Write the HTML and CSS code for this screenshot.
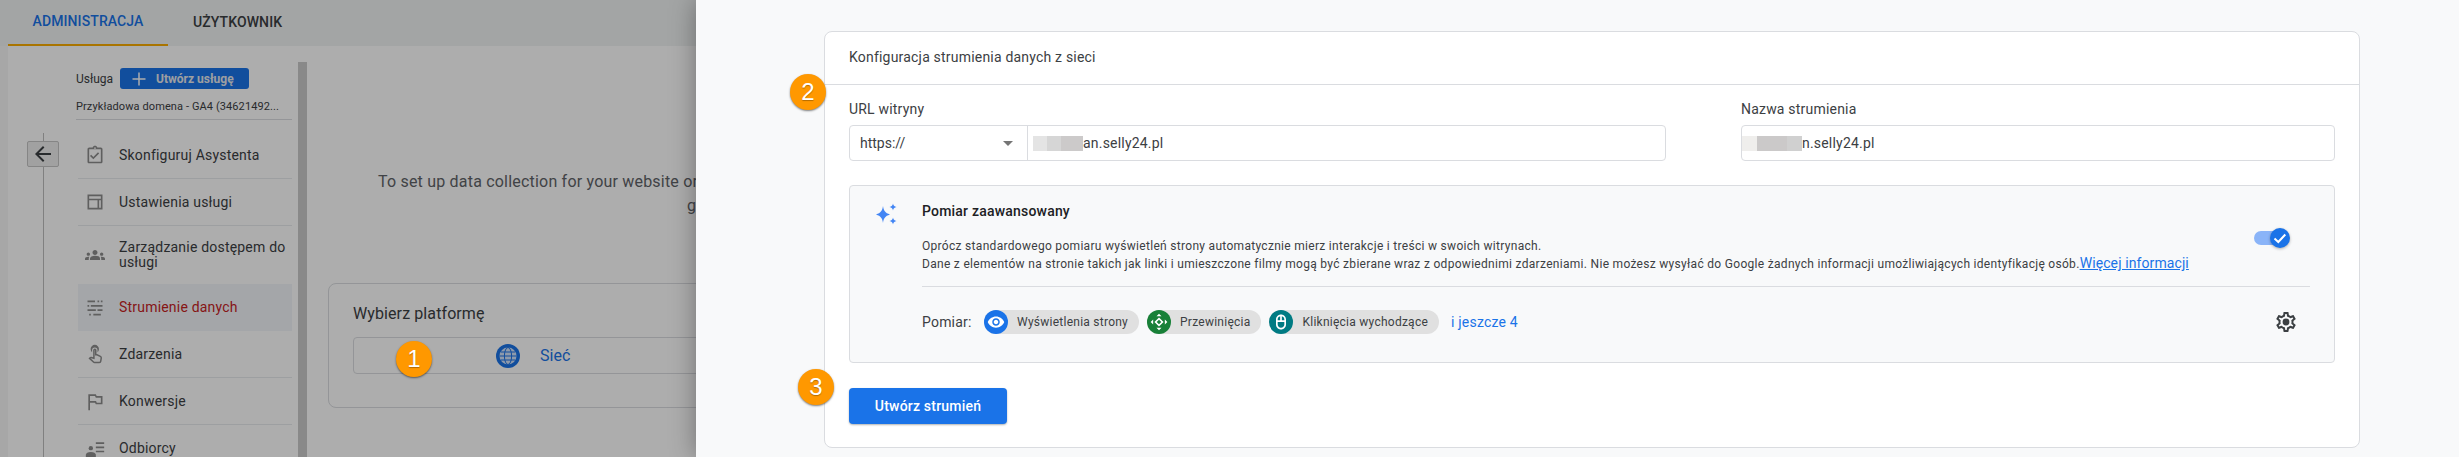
FILE: index.html
```html
<!DOCTYPE html>
<html lang="pl">
<head>
    <meta charset="UTF-8">
    <meta name="viewport" content="width=device-width, initial-scale=1.0">
    <title>Konfiguracja strumienia danych</title>
    <link rel="stylesheet" href="styles.css">
</head>
<body>
    <div class="admin">
        <div class="tabs">
            <div class="tab tab-active">ADMINISTRACJA</div>
            <div class="tab">UŻYTKOWNIK</div>
        </div>
        <div class="admin-body">
            <div class="back-col">
                <div class="back-btn">
                    <svg viewBox="0 0 24 24" width="24" height="24"><path d="M20 11H7.83l5.59-5.59L12 4l-8 8 8 8 1.41-1.41L7.83 13H20v-2z"/></svg>
                </div>
            </div>
            <div class="nav-col">
                <div class="property-row">
                    <span class="property-label">Usługa</span>
                    <div class="create-btn">
                        <svg viewBox="0 0 16 16" width="16" height="16"><path d="M8 1.5v13M1.5 8h13"/></svg>
                        Utwórz usługę
                    </div>
                </div>
                <div class="property-name">Przykładowa domena - GA4 (34621492...</div>
                <div class="nav-list">
                    <div class="nav-item">
                        <svg class="nav-icon" viewBox="0 0 24 24"><path d="M19 3h-4.2C14.400 1.800 13.300 1 12 1s-2.400.8-2.800 2H5c-1.100 0-2 .9-2 2v15c0 1.100.9 2 2 2h14c1.100 0 2-.9 2-2V5c0-1.100-.9-2-2-2zm-7-.2c.6 0 1 .5 1 1s-.4 1-1 1-1-.5-1-1 .4-1 1-1zM19 20H5V5h14v15zm-2-9.900-1.400-1.400-5.600 5.600-2.600-2.600L6 13.100l4 4z"/></svg>
                        <span>Skonfiguruj Asystenta</span>
                    </div>
                    <div class="nav-item">
                        <svg class="nav-icon" viewBox="0 0 24 24"><path d="M3 3h18v18H3V3zm2 2v3h14V5H5zm0 5v9h10v-9H5zm12 0v9h2v-9h-2z"/></svg>
                        <span>Ustawienia usługi</span>
                    </div>
                    <div class="nav-item nav-item-tall">
                        <svg class="nav-icon" viewBox="0 0 24 24"><path d="M12 12.750c1.630 0 3.070.39 4.240.9 1.080.48 1.760 1.560 1.760 2.730V18H6v-1.610c0-1.180.68-2.260 1.760-2.730 1.170-.52 2.610-.91 4.240-.91zM4 13c1.100 0 2-.9 2-2s-.9-2-2-2-2 .9-2 2 .9 2 2 2zm1.130 1.100C4.760 14.040 4.390 14 4 14c-.99 0-1.930.21-2.780.58C.48 14.900 0 15.620 0 16.430V18h4.500v-1.610c0-.83.23-1.610.63-2.290zM20 13c1.100 0 2-.9 2-2s-.9-2-2-2-2 .9-2 2 .9 2 2 2zm4 3.430c0-.81-.48-1.530-1.220-1.850C21.930 14.210 20.990 14 20 14c-.39 0-.76.04-1.130.1.4.68.63 1.460.63 2.290V18H24v-1.570zM12 6c1.660 0 3 1.340 3 3s-1.340 3-3 3-3-1.340-3-3 1.340-3 3-3z"/></svg>
                        <span>Zarządzanie dostępem do usługi</span>
                    </div>
                    <div class="nav-item nav-item-active">
                        <svg class="nav-icon" viewBox="0 0 24 24"><path d="M3 3h9v2H3zM15 3h2v2h-2zM19 3h2v2h-2zM3 8.500h2v2H3zM7 8.500h14v2H7zM3 13.500h10v2H3zM15 13.500h6v2h-6zM5 19h2v2H5zM10 19h9v2h-9z"/></svg>
                        <span>Strumienie danych</span>
                    </div>
                    <div class="nav-item">
                        <svg class="nav-icon" viewBox="0 0 24 24"><path d="M8.500 9.800A5 5 0 1 1 15 9.800V7.500a3.200 3.200 0 1 0-6.500 0z"/><path class="nav-stroke" d="M10.700 7.500a1.100 1.100 0 0 1 2.200 0V13l1.500 0 4 1.900c.8.4 1.200 1.100 1.100 1.900l-.6 3.800c-.1.900-.8 1.500-1.700 1.500h-5.800c-.5 0-.9-.2-1.200-.5L5.500 17.300l.7-.7c.3-.3.7-.4 1.100-.3l3.400.8z"/></svg>
                        <span>Zdarzenia</span>
                    </div>
                    <div class="nav-item">
                        <svg class="nav-icon" viewBox="0 0 24 24"><path d="M14 6l-1-2H4v19h2v-9h6l1 2h8V6h-7zm5 8h-4.800l-1-2H6V6h6l1 2h6v6z"/></svg>
                        <span>Konwersje</span>
                    </div>
                    <div class="nav-item">
                        <svg class="nav-icon" viewBox="0 0 24 24"><path d="M13 4h10v2H13zM13 9h10v2H13zM13 14h10v2H13z"/><circle cx="7" cy="11" r="2.600"/><path d="M1 22v-3c0-2 2.500-3.500 6-3.500s6 1.500 6 3.500v3z"/></svg>
                        <span>Odbiorcy</span>
                    </div>
                </div>
            </div>
            <div class="scrollbar"></div>
            <div class="main-col">
                <div class="setup-text">
                    <div class="setup-line">To set up data collection for your website or</div>
                    <div class="setup-line setup-line-end">ge</div>
                </div>
                <div class="platform-card">
                    <div class="platform-title">Wybierz platformę</div>
                    <div class="platform-box">
                        <svg class="globe" viewBox="0 0 24 24" width="24" height="24">
                            <circle cx="12" cy="12" r="12" fill="#1a73e8"/>
                            <circle cx="12" cy="12" r="8.500" fill="#d2e3fc"/>
                            <g fill="none" stroke="#1a73e8" stroke-width="1">
                                <ellipse cx="12" cy="12" rx="3.600" ry="8.500"/>
                                <path d="M3.500 12h17M4.800 8h14.400M4.800 16h14.400"/>
                            </g>
                        </svg>
                        <span class="platform-name">Sieć</span>
                    </div>
                </div>
            </div>
        </div>
        <div class="scrim"></div>
        <div class="step-badge step-one">1</div>
    </div>

    <div class="drawer">
        <div class="step-badge step-two">2</div>
        <div class="step-badge step-three">3</div>
        <div class="config-card">
            <div class="config-header">Konfiguracja strumienia danych z sieci</div>
            <div class="config-body">
                <div class="fields">
                    <div class="field field-url">
                        <div class="field-label">URL witryny</div>
                        <div class="field-box">
                            <div class="protocol">
                                https://
                                <span class="protocol-arrow"></span>
                            </div>
                            <div class="field-value"><span class="redacted redacted-url"></span>an.selly24.pl</div>
                        </div>
                    </div>
                    <div class="field field-name">
                        <div class="field-label">Nazwa strumienia</div>
                        <div class="field-box">
                            <div class="field-value field-value-flush"><span class="redacted redacted-name"></span>n.selly24.pl</div>
                        </div>
                    </div>
                </div>

                <div class="measure-panel">
                    <div class="measure-icon">
                        <svg viewBox="0 0 22 24" width="22" height="24"><path d="M7 4c.6 4.500 2 6.900 7 8.500-5 1.600-6.400 4-7 8.500-.6-4.500-2-6.900-7-8.500 5-1.600 6.400-4 7-8.500zM17 1.500c.3 2 1.200 3 3.500 3.500-2.300.5-3.200 1.500-3.500 3.500-.3-2-1.200-3-3.500-3.500 2.300-.5 3.200-1.500 3.500-3.500zM17 15.500c.3 2 1.200 3 3.500 3.500-2.300.5-3.200 1.500-3.500 3.500-.3-2-1.200-3-3.500-3.500 2.300-.5 3.200-1.500 3.500-3.500z"/></svg>
                    </div>
                    <div class="measure-content">
                        <div class="measure-top">
                            <div class="measure-title">Pomiar zaawansowany</div>
                            <div class="measure-info">
                                <p>Oprócz standardowego pomiaru wyświetleń strony automatycznie mierz interakcje i treści w swoich witrynach.</p>
                                <p>Dane z elementów na stronie takich jak linki i umieszczone filmy mogą być zbierane wraz z odpowiednimi zdarzeniami. Nie możesz wysyłać do Google żadnych informacji umożliwiających identyfikację osób.<a class="more-link">Więcej informacji</a></p>
                            </div>
                            <div class="toggle">
                                <div class="toggle-thumb">
                                    <svg viewBox="0 0 20 20" width="20" height="20"><path d="M4.500 10.500l3.800 3.500 7-7.500"/></svg>
                                </div>
                            </div>
                        </div>
                        <div class="measure-bottom">
                            <span class="measure-label">Pomiar:</span>
                            <div class="chip">
                                <span class="chip-icon chip-blue">
                                    <svg viewBox="0 0 24 24" width="18" height="18"><path d="M12 4.500C7 4.500 2.730 7.610 1 12c1.730 4.390 6 7.500 11 7.500s9.270-3.110 11-7.500c-1.730-4.390-6-7.500-11-7.500zM12 17c-2.760 0-5-2.240-5-5s2.240-5 5-5 5 2.240 5 5-2.240 5-5 5zm0-8c-1.660 0-3 1.340-3 3s1.340 3 3 3 3-1.340 3-3-1.340-3-3-3z"/></svg>
                                </span>
                                Wyświetlenia strony
                            </div>
                            <div class="chip">
                                <span class="chip-icon chip-green">
                                    <svg viewBox="0 0 24 24" width="20" height="20"><path fill-rule="evenodd" d="M12 6.500l5.500 5.500-5.500 5.500L6.500 12zM12 9.200L9.200 12l2.800 2.800 2.800-2.800zM12 2l3 3H9zM12 22l-3-3h6zM2 12l3-3v6zM22 12l-3 3V9z"/></svg>
                                </span>
                                Przewinięcia
                            </div>
                            <div class="chip">
                                <span class="chip-icon chip-teal">
                                    <svg viewBox="0 0 24 24" width="20" height="20"><path fill-rule="evenodd" d="M12 3c3.300 0 6 2.700 6 6v6c0 3.300-2.700 6-6 6s-6-2.700-6-6V9c0-3.300 2.700-6 6-6zm-1 2.200C9.300 5.600 8 7.100 8 9v1h3V5.200zm2 0V10h3V9c0-1.900-1.300-3.400-3-3.800zM8 12v3c0 2.200 1.800 4 4 4s4-1.800 4-4v-3H8z"/></svg>
                                </span>
                                Kliknięcia wychodzące
                            </div>
                            <a class="chip-more">i jeszcze 4</a>
                            <svg class="gear" viewBox="0 0 24 24" width="24" height="24"><path d="M19.430 12.980c.04-.32.07-.64.07-.98 0-.34-.03-.66-.07-.98l2.110-1.650c.19-.15.24-.42.12-.64l-2-3.460c-.09-.16-.26-.25-.44-.25-.06 0-.12.01-.17.03l-2.490 1c-.52-.4-1.080-.73-1.690-.98l-.38-2.650C14.460 2.180 14.250 2 14 2h-4c-.25 0-.46.18-.49.42l-.38 2.650c-.61.25-1.170.59-1.690.98l-2.490-1c-.06-.02-.12-.03-.18-.03-.17 0-.34.09-.43.25l-2 3.460c-.13.22-.07.49.12.64l2.110 1.650c-.04.32-.07.65-.07.98 0 .33.03.66.07.98l-2.110 1.650c-.19.15-.24.42-.12.64l2 3.460c.09.16.26.25.44.25.06 0 .12-.01.17-.03l2.490-1c.52.4 1.080.73 1.690.98l.38 2.650c.03.24.24.42.49.42h4c.25 0 .46-.18.49-.42l.38-2.650c.61-.25 1.170-.59 1.690-.98l2.490 1c.06.02.12.03.18.03.17 0 .34-.09.43-.25l2-3.460c.12-.22.07-.49-.12-.64l-2.110-1.650zm-1.980-1.710c.04.31.05.52.05.73 0 .21-.02.43-.05.73l-.14 1.130.89.7 1.080.84-.7 1.210-1.270-.51-1.040-.42-.9.68c-.43.32-.84.56-1.250.73l-1.060.43-.16 1.130-.2 1.350h-1.400l-.19-1.350-.16-1.130-1.060-.43c-.43-.18-.83-.41-1.230-.71l-.91-.7-1.060.43-1.270.51-.7-1.210 1.080-.84.89-.7-.14-1.130c-.03-.31-.05-.54-.05-.74s.02-.43.05-.73l.14-1.130-.89-.7-1.080-.84.7-1.210 1.270.51 1.040.42.9-.68c.43-.32.84-.56 1.250-.73l1.060-.43.16-1.130.2-1.350h1.390l.19 1.350.16 1.130 1.060.43c.43.18.83.41 1.230.71l.91.7 1.060-.43 1.270-.51.7 1.210-1.070.85-.89.7.14 1.130z"/><circle cx="12" cy="12" r="3.400"/></svg>
                        </div>
                    </div>
                </div>

                <div class="submit-btn">Utwórz strumień</div>
            </div>
        </div>
    </div>
</body>
</html>
```

FILE: styles.css
```css
* {
    box-sizing: border-box;
}

html, body {
    height: 100%;
}

body {
    margin: 0;
    display: flex;
    overflow: hidden;
    font-family: Roboto, "Liberation Sans", sans-serif;
    font-size: 14px;
    color: #202124;
    background-color: #f8f9fa;
}

/* Left side, dimmed by the scrim */
.admin {
    position: relative;
    width: 696px;
    flex: none;
    overflow: hidden;
    background-color: #f6f6f6;
}

.scrim {
    position: absolute;
    top: 0;
    right: 0;
    bottom: 0;
    left: 0;
    background-color: rgba(0, 0, 0, 0.32);
}

.tabs {
    display: flex;
    height: 46px;
    padding-left: 8px;
    background-color: #f1f3f4;
}

.tab {
    display: flex;
    align-items: center;
    justify-content: center;
    height: 46px;
    padding-bottom: 2px;
    font-size: 14px;
    font-weight: 500;
    letter-spacing: 0.1px;
    color: #3c4043;
}

.tab:last-child {
    margin-left: 25px;
}

.tab-active {
    width: 160px;
    color: #1a73e8;
    border-bottom: 2px solid #f9ab00;
}

.admin-body {
    display: flex;
    margin-left: 8px;
    height: 411px;
    background-color: #fff;
}

.back-col {
    width: 68px;
    flex: none;
    margin-top: 87px;
    padding-left: 19px;
    background: linear-gradient(#bdbdbd, #bdbdbd) no-repeat 35px 0 / 1px 100%;
}

.back-btn {
    display: flex;
    align-items: center;
    justify-content: center;
    width: 32px;
    height: 26px;
    margin-top: 8px;
    background-color: #eeeeee;
    border: 1px solid #c4c4c4;
    border-radius: 2px;
}

.back-btn svg {
    fill: #3c4043;
}

.nav-col {
    width: 216px;
    flex: none;
}

.property-row {
    display: flex;
    align-items: center;
    height: 21px;
    margin-top: 22px;
}

.property-label {
    width: 44px;
    font-size: 12px;
    color: #3c4043;
}

.create-btn {
    display: flex;
    align-items: center;
    gap: 9px;
    width: 129px;
    height: 21px;
    padding-left: 11px;
    font-size: 12px;
    font-weight: 700;
    color: #e8eaed;
    background-color: #1a73e8;
    border-radius: 3px;
}

.create-btn svg {
    fill: none;
    stroke: #fff;
    stroke-width: 1.500;
}

.property-name {
    height: 31px;
    line-height: 35px;
    font-size: 11px;
    letter-spacing: 0.1px;
    white-space: nowrap;
    color: #3c4043;
    border-bottom: 1px solid #dadce0;
}

.nav-list {
    margin: 12px 0 0 2px;
}

.nav-item {
    display: flex;
    align-items: center;
    height: 47px;
    padding-left: 7px;
    border-bottom: 1px solid #e8eaed;
    letter-spacing: 0.2px;
    line-height: 15px;
    color: #3c4043;
}

.nav-item:last-child {
    border-bottom: none;
}

.nav-item-tall {
    height: 58px;
    border-bottom: none;
}

.nav-item-active {
    color: #c5221f;
    background-color: #f2f5f9;
    border-bottom: none;
}

.nav-icon {
    width: 20px;
    height: 20px;
    flex: none;
    margin-right: 14px;
    fill: #8d8d8d;
}

.nav-stroke {
    fill: none;
    stroke: #8d8d8d;
    stroke-width: 1.800;
}

.scrollbar {
    width: 9px;
    flex: none;
    margin: 16px 0 0 6px;
    background-color: #cbcbcb;
}

.main-col {
    flex: 1;
    min-width: 0;
    padding-left: 21px;
}

.setup-text {
    padding-top: 124px;
    font-size: 16px;
    line-height: 24px;
    letter-spacing: 0.2px;
    color: #5f6368;
}

.setup-line {
    padding-left: 50px;
    white-space: nowrap;
}

.setup-line-end {
    padding-left: 359px;
}

.platform-card {
    width: 600px;
    height: 125px;
    margin-top: 65px;
    padding: 18px 24px;
    background-color: #fff;
    border: 1px solid #dadce0;
    border-radius: 8px;
}

.platform-title {
    font-size: 16px;
    line-height: 24px;
    letter-spacing: 0.1px;
    color: #3c4043;
}

.platform-box {
    display: flex;
    align-items: center;
    height: 37px;
    margin-top: 11px;
    padding-left: 142px;
    background-color: #fff;
    border: 1px solid #dadce0;
    border-radius: 4px;
}

.platform-name {
    margin-left: 20px;
    font-size: 16px;
    color: #1a73e8;
}

/* Orange step markers sit above everything else */
.step-badge {
    position: absolute;
    z-index: 3;
    display: flex;
    align-items: center;
    justify-content: center;
    width: 36px;
    height: 36px;
    font-family: "Liberation Sans", Arial, sans-serif;
    font-size: 24px;
    color: #fff;
    background-color: #ff9800;
    border-radius: 50%;
    box-shadow: 0 1px 2px rgba(0, 0, 0, 0.5);
    text-shadow: 0 1px 1px rgba(0, 0, 0, 0.3);
}

.step-one {
    left: 396px;
    top: 341px;
}

.step-two {
    left: 94px;
    top: 74px;
}

.step-three {
    left: 102px;
    top: 369px;
}

/* Right drawer */
.drawer {
    position: relative;
    z-index: 2;
    flex: 1;
    min-width: 0;
    padding: 31px 99px 0 128px;
    background-color: #f8f9fa;
    box-shadow: 0 0 24px rgba(0, 0, 0, 0.35);
}

.config-card {
    height: 417px;
    background-color: #fff;
    border: 1px solid #dadce0;
    border-radius: 8px;
}

.config-header {
    height: 53px;
    padding-left: 24px;
    line-height: 51px;
    letter-spacing: 0.2px;
    color: #3c4043;
    border-bottom: 1px solid #dadce0;
}

.config-body {
    padding: 14px 24px 0;
}

.fields {
    display: flex;
    justify-content: space-between;
}

.field-url {
    width: 817px;
}

.field-name {
    width: 594px;
}

.field-label {
    height: 26px;
    line-height: 20px;
    letter-spacing: 0.2px;
    color: #3c4043;
}

.field-box {
    display: flex;
    height: 36px;
    background-color: #fff;
    border: 1px solid #dadce0;
    border-radius: 4px;
}

.protocol {
    display: flex;
    align-items: center;
    justify-content: space-between;
    width: 178px;
    padding: 0 14px 0 10px;
    color: #3c4043;
    border-right: 1px solid #dadce0;
}

.protocol-arrow {
    border-top: 5px solid #757575;
    border-left: 5px solid transparent;
    border-right: 5px solid transparent;
}

.field-value {
    display: flex;
    align-items: center;
    padding-left: 5px;
    letter-spacing: 0.2px;
    color: #3c4043;
}

.field-value-flush {
    padding-left: 0;
}

.redacted {
    height: 15px;
    flex: none;
}

.redacted-url {
    width: 50px;
    background: linear-gradient(90deg, #e4e4e4 0 14px, #d6d6d6 14px 28px, #cccaca 28px 50px);
}

.redacted-name {
    width: 60px;
    background: linear-gradient(90deg, #efeeec 0 15px, #cbc9c9 15px 45px, #d0d0d0 45px 60px);
}

.measure-panel {
    display: flex;
    height: 178px;
    margin-top: 24px;
    padding: 16px 24px 0 26px;
    background-color: #f8f9fa;
    border: 1px solid #dadce0;
    border-radius: 4px;
}

.measure-icon {
    width: 46px;
    flex: none;
}

.measure-icon svg {
    fill: #4285f4;
}

.measure-content {
    flex: 1;
    min-width: 0;
}

.measure-top {
    position: relative;
    height: 85px;
    border-bottom: 1px solid #dadce0;
}

.measure-title {
    height: 18px;
    line-height: 18px;
    font-weight: 500;
    letter-spacing: 0.2px;
}

.measure-info {
    padding-top: 17px;
    font-size: 12px;
    line-height: 18px;
    letter-spacing: 0.3px;
    color: #3c4043;
}

.measure-info p {
    margin: 0;
}

.more-link {
    font-size: 14px;
    line-height: 0;
    letter-spacing: 0.1px;
    color: #1a73e8;
    text-decoration: underline;
}

.toggle {
    position: absolute;
    right: 24px;
    top: 29px;
    width: 32px;
    height: 14px;
    background-color: #8ab4f8;
    border-radius: 7px;
}

.toggle-thumb {
    position: absolute;
    right: -4px;
    top: -3px;
    width: 20px;
    height: 20px;
    background-color: #1a73e8;
    border-radius: 50%;
    box-shadow: 0 1px 3px rgba(0, 0, 0, 0.3);
}

.toggle-thumb svg {
    display: block;
    fill: none;
    stroke: #fff;
    stroke-width: 2;
}

.measure-bottom {
    position: relative;
    display: flex;
    align-items: center;
    gap: 8px;
    height: 70px;
}

.measure-label {
    width: 54px;
    font-size: 14px;
    letter-spacing: 0.2px;
    color: #3c4043;
}

.chip {
    display: flex;
    align-items: center;
    gap: 9px;
    height: 24px;
    padding-right: 11px;
    font-size: 12px;
    letter-spacing: 0.25px;
    color: #3c4043;
    background-color: #e0e0e0;
    border-radius: 12px;
}

.chip-icon {
    display: flex;
    align-items: center;
    justify-content: center;
    width: 24px;
    height: 24px;
    border-radius: 50%;
}

.chip-icon svg {
    fill: #fff;
}

.chip-blue {
    background-color: #1a73e8;
}

.chip-green {
    background-color: #188038;
}

.chip-teal {
    background-color: #007b83;
}

.chip-more {
    margin-left: 4px;
    letter-spacing: 0.2px;
    color: #1a73e8;
}

.gear {
    position: absolute;
    right: 12px;
    top: 23px;
    fill: #3c4043;
}

.submit-btn {
    display: flex;
    align-items: center;
    justify-content: center;
    width: 158px;
    height: 36px;
    margin-top: 25px;
    font-weight: 500;
    letter-spacing: 0.2px;
    color: #fff;
    background-color: #1a73e8;
    border-radius: 4px;
    box-shadow: 0 1px 2px rgba(60, 64, 67, 0.4);
}
```
